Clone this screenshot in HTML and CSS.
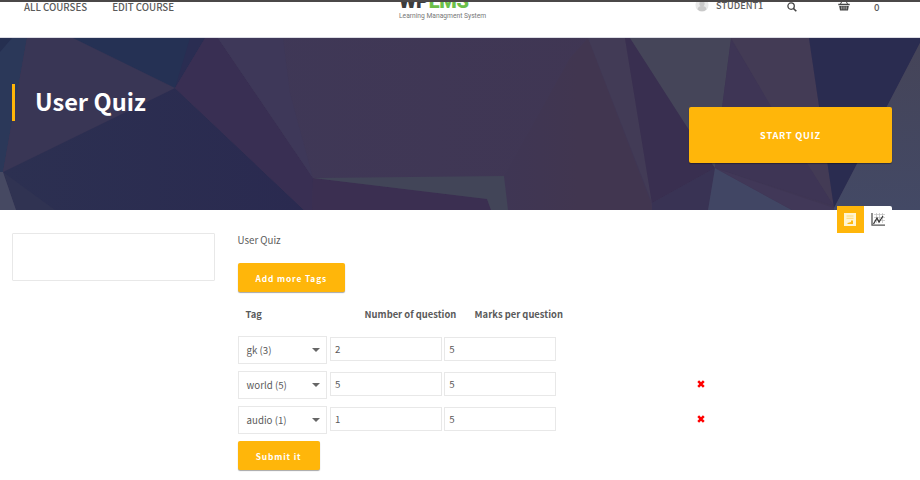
FILE: index.html
```html
<!DOCTYPE html>
<html lang="en">
<head>
<meta charset="utf-8">
<title>User Quiz</title>
<link rel="stylesheet" href="styles.css">
</head>
<body>
<header class="header">
  <nav class="nav"><a>ALL COURSES</a><a>EDIT COURSE</a></nav>
  <div class="logo">
    <div class="logo-name">WP<span>LMS</span></div>
    <div class="logo-sub">Learning Managment System</div>
  </div>
  <div class="tools">
    <svg class="avatar" viewBox="0 0 16 16"><circle cx="8" cy="8" r="7.5" fill="#e9e9e9"/><circle cx="8" cy="6.5" r="3" fill="#c9c9c9"/><path d="M3 13a5 4 0 0 1 10 0a7 7 0 0 1-10 0z" fill="#c9c9c9"/></svg>
    <span class="user">STUDENT1</span>
    <svg class="search" viewBox="0 0 10 10"><circle cx="4.1" cy="4.1" r="3.2" fill="none" stroke="#444" stroke-width="1.3"/><path d="M6.5 6.5L9.3 9.3" stroke="#444" stroke-width="1.6"/></svg>
    <svg class="basket" viewBox="0 0 12 12"><path d="M2.5 5L4.5 1h3L9.5 5" fill="none" stroke="#444"/><path d="M.3 4.7h11.4v1.6H.3zM1.2 7h9.6l-.8 4.5H2z" fill="#444"/><path d="M3.8 7.4v3M6 7.4v3M8.2 7.4v3" stroke="#fff" stroke-width=".6"/></svg>
    <span class="count">0</span>
  </div>
</header>
<section class="hero">
  <svg class="hero-bg" viewBox="0 0 920 172" preserveAspectRatio="none">
    <defs>
      <linearGradient id="blue"><stop offset="0" stop-color="#2c3051"/><stop offset="1" stop-color="#2a2a50"/></linearGradient>
      <linearGradient id="mauve"><stop offset="0" stop-color="#3f3857"/><stop offset="1" stop-color="#403653"/></linearGradient>
      <linearGradient id="rose"><stop offset="0" stop-color="#3f3654"/><stop offset=".5" stop-color="#413650"/></linearGradient>
      <linearGradient id="slate" x2="0" y2="1"><stop offset="0" stop-color="#454458"/><stop offset="1" stop-color="#434965"/></linearGradient>
    </defs>
    <rect width="920" height="172" fill="#3f3654"/>
    <path d="M0 0H27L3 134H0z" fill="#2b3859"/>
    <path d="M0 0H12L0 14z" fill="#252f50"/>
    <path d="M27 0H73L175 50L3 134z" fill="#393655"/>
    <path d="M73 0H205L175 50z" fill="#253154"/>
    <path d="M190 0H205L175 50z" fill="#2a2d52"/>
    <path d="M3 134L175 50L304 172H16z" fill="url(#blue)"/>
    <path d="M3 134L55 172H16z" fill="#303352"/>
    <path d="M0 134H3L16 172H0z" fill="#464962"/>
    <path d="M205 0H218L313 140L312 172H304L175 50z" fill="#392f53"/>
    <path d="M218 0H588L651 165L652 172H313V140z" fill="url(#mauve)"/>
    <path d="M218 0H283L290 55L313 140z" fill="#3e3859"/>
    <path d="M588 0L651 165L652 172H508L504 138L570 20z" fill="url(#rose)"/>
    <path d="M313 140L487 161L491 172H312z" fill="#3b2f51"/>
    <path d="M313 140L504 138L508 172H491L487 161z" fill="#424558"/>
    <path d="M588 0H625L652 165z" fill="#423b56"/>
    <path d="M625 0H630L715 130L652 165z" fill="#392f50"/>
    <path d="M630 0H731L722 70L715 130L689 92z" fill="#454559"/>
    <path d="M731 2L834 168L715 130L722 70z" fill="#3e3555"/>
    <path d="M731 0H809L834 168L772 70z" fill="#433b55"/>
    <path d="M809 0H920V5L834 170z" fill="#2a2c50"/>
    <path d="M920 5V172H833z" fill="url(#slate)"/>
    <path d="M652 165L715 130L708 172H652z" fill="#393354"/>
    <path d="M715 130L792 172H708z" fill="#414664"/>
    <path d="M715 130L834 170V172H792z" fill="#413858"/>
  </svg>
  <h1 class="title">User Quiz</h1>
  <button class="btn start">START QUIZ</button>
  <div class="tabs">
    <span class="tab tab-on"><svg viewBox="0 0 12 13"><path d="M0 0H12V13H0z" fill="#fff4d0"/><path d="M2.5 3h7M2.5 5.3h7" stroke="#ffd873"/><path d="M3.5 11V10L7 9V7.5h2V11z" fill="#ffb90f"/></svg></span>
    <span class="tab"><svg viewBox="0 0 14 13"><path d="M3 1.5h11M3 4.5h11M3 7.5h11M5.5 0v10M8.5 0v10M11.5 0v10" stroke="#bbb" stroke-width=".7"/><path d="M1 0V12.2H14" fill="none" stroke="#555" stroke-width="1.3"/><path d="M2.5 11L6 5L8 9L12 3" fill="none" stroke="#333" stroke-width="1.2"/></svg></span>
  </div>
</section>
<main class="main">
  <aside class="side"></aside>
  <div class="content">
    <p class="name">User Quiz</p>
    <button class="btn add">Add more Tags</button>
    <div class="heads"><span>Tag</span><span>Number of question</span><span>Marks per question</span></div>
    <div class="row"><div class="select">gk (3)<i></i></div><div class="input">2</div><div class="input">5</div></div>
    <div class="row"><div class="select">world (5)<i></i></div><div class="input">5</div><div class="input">5</div><svg class="del" viewBox="0 0 8 8"><path d="M1.2 1.2L6.8 6.8M6.8 1.2L1.2 6.8" stroke="#f00" stroke-width="2.5"/></svg></div>
    <div class="row"><div class="select">audio (1)<i></i></div><div class="input">1</div><div class="input">5</div><svg class="del" viewBox="0 0 8 8"><path d="M1.2 1.2L6.8 6.8M6.8 1.2L1.2 6.8" stroke="#f00" stroke-width="2.5"/></svg></div>
    <button class="btn submit">Submit it</button>
  </div>
</main>
</body>
</html>
```
FILE: styles.css
```css
* { box-sizing: border-box; }
body {
  margin: 0;
  width: 920px;
  height: 480px;
  overflow: hidden;
  background: #fff;
  color: #5a5a5a;
  font: 9.7px/14px "Noto Sans CJK SC", "Open Sans", sans-serif;
}
.header {
  display: grid;
  grid-template-columns: 399px 100px 1fr;
  height: 38px;
  overflow: hidden;
  border-top: 2px solid #4b4848;
  border-bottom: 1px solid #dcdce4;
  white-space: nowrap;
}
.nav { display: flex; gap: 25px; padding-left: 24px; margin-top: -2px; font-weight: 500; }
.logo { margin-top: -12px; }
.logo-name { font: 900 20px/22px Roboto, sans-serif; letter-spacing: -.3px; color: #3c3c3c; }
.logo-name span { color: #6cc04a; }
.logo-sub { font: 6.7px/9px Roboto, sans-serif; color: #777; }
.tools { display: flex; align-items: flex-start; padding-left: 196px; font-weight: 500; }
.avatar { width: 14px; height: 14px; margin-top: -4px; }
.user { width: 71px; margin: -4px 0 0 7px; font-size: 9.2px; }
.search { width: 10px; height: 10px; }
.basket { width: 12px; height: 12px; margin: -3px 0 0 41px; }
.count { margin: -2px 0 0 24px; }
.hero {
  position: relative;
  display: flex;
  justify-content: space-between;
  align-items: flex-start;
  height: 172px;
  padding: 46px 28px 0 12px;
}
.hero-bg { position: absolute; inset: 0; width: 920px; height: 172px; }
.title {
  position: relative;
  margin: 0;
  padding: 0 0 2px 20px;
  border-left: 3px solid #ffb508;
  color: #fff;
  font-size: 23.6px;
  font-weight: 700;
  line-height: 34.5px;
}
.btn {
  display: block;
  padding: 0;
  border: 0;
  border-radius: 2px;
  background: #ffb60a;
  box-shadow: 0 1px 1px rgba(0, 0, 0, .35);
  color: #fff;
  font: 700 8.4px/14px "Noto Sans CJK SC", sans-serif;
  letter-spacing: .85px;
}
.start { position: relative; width: 203px; height: 56px; margin-top: 23px; font-size: 9.2px; letter-spacing: .75px; }
.tabs { position: absolute; right: 28px; bottom: -23px; display: flex; }
.tab {
  display: flex;
  align-items: center;
  justify-content: center;
  width: 28px;
  height: 27px;
  background: #fff;
}
.tab:last-child { border-top-right-radius: 2px; }
.tab svg { width: 14px; height: 13px; }
.tab-on { width: 27.5px; background: #ffb60a; }
.main { display: flex; gap: 22.6px; padding: 23px 12px 0; }
.side { width: 203px; height: 48px; border: 1px solid #e8e8e8; border-radius: 1px; }
.name { margin: 0 0 16px; }
.add { width: 107.4px; height: 29px; }
.heads {
  display: grid;
  grid-template-columns: 119px 110px 1fr;
  padding: 15px 0 15px 8px;
  font-size: 9.4px;
  font-weight: 700;
}
.row { display: flex; gap: 2.4px; height: 34.8px; }
.row:nth-last-of-type(1) { height: 35.6px; }
.select {
  display: flex;
  align-items: center;
  justify-content: space-between;
  width: 89.9px;
  height: 28px;
  padding: 0 6px 0 8px;
  border: 1px solid #e8e8e8;
}
.select i { border: 4px solid transparent; border-top-color: #666; border-bottom: 0; }
.input { width: 112px; height: 24px; margin-top: 1px; padding: 4px; border: 1px solid #e8e8e8; }
.del { width: 8px; height: 8px; margin: 9px 0 0 138.4px; }
.submit { width: 82px; height: 29px; }
```
